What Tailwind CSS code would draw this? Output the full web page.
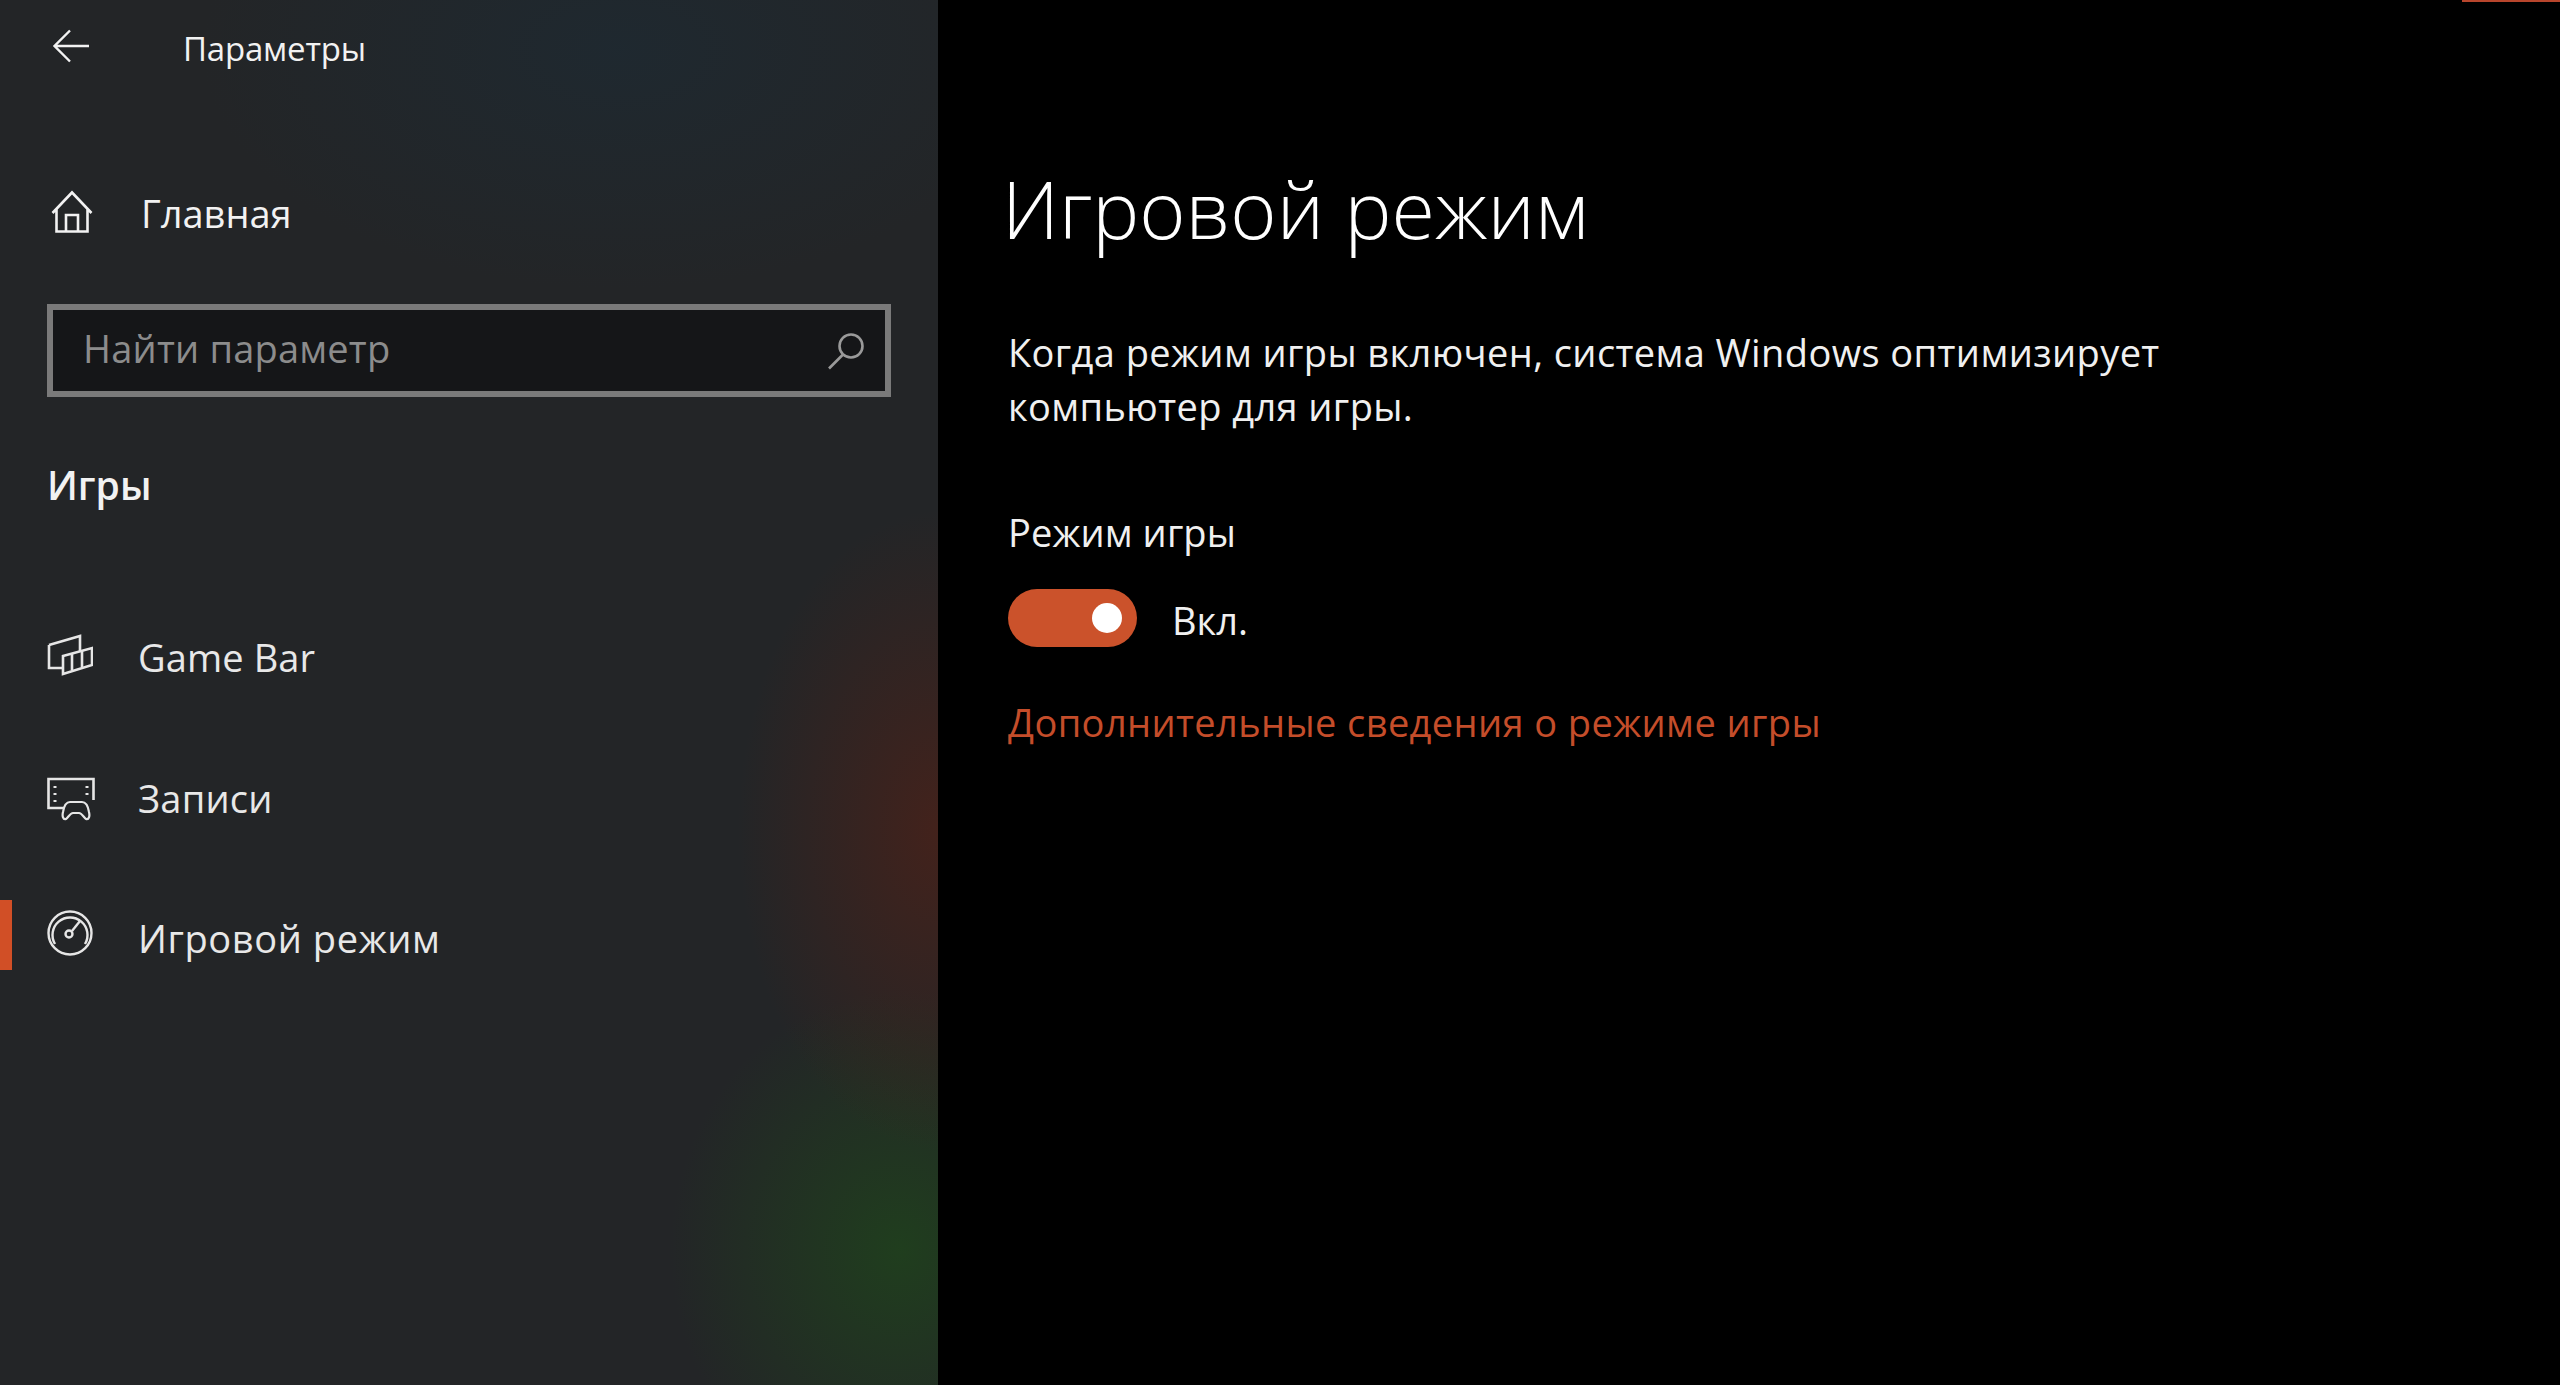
<!DOCTYPE html>
<html lang="ru">
<head>
    <meta charset="UTF-8">
    <title>Параметры</title>
    <script src="https://cdn.jsdelivr.net/npm/@tailwindcss/browser@4"></script>
</head>
<body class="bg-black text-white font-['Open_Sans',sans-serif]">
<div class="relative flex h-[1385px] w-[2560px] overflow-hidden">

    <!-- Top right accent line -->
    <div class="absolute right-0 top-0 h-[2px] w-[98px] bg-[#b8452c]"></div>

    <!-- Sidebar -->
    <aside class="flex h-full w-[938px] shrink-0 flex-col bg-[#232527] bg-[radial-gradient(ellipse_200px_320px_at_938px_830px,rgba(88,32,20,0.6),transparent),radial-gradient(ellipse_230px_260px_at_900px_1250px,rgba(30,75,25,0.65),transparent),radial-gradient(ellipse_420px_240px_at_620px_50px,rgba(20,50,70,0.28),transparent)]">

        <!-- Title row -->
        <div class="flex h-[96px] items-center pl-[52px]">
            <svg class="mb-[4px] h-[34px] w-[38px]" viewBox="0 0 38 34" fill="none" stroke="#f2f2f2" stroke-width="2.4">
                <path d="M18 1.5 2.5 17 18 32.5M2.5 17H37"/>
            </svg>
            <span class="ml-[93px] text-[33px] leading-none tracking-[-0.2px] text-[#f2f2f2]">Параметры</span>
        </div>

        <!-- Home -->
        <div class="mt-[87px] flex h-[60px] items-center pl-[50px]">
            <svg class="mb-[2px] h-[44px] w-[44px]" viewBox="0 0 44 44" fill="none" stroke="#f2f2f2" stroke-width="2.6">
                <path d="M2.5 23 22 2.5 41.5 23M6.5 19.5V41.5H37.5V19.5M16 41.5V25H28V41.5"/>
            </svg>
            <span class="ml-[47px] text-[38px] leading-none tracking-[0px] text-[#f2f2f2]">Главная</span>
        </div>

        <!-- Search box -->
        <div class="ml-[47px] mt-[61px] flex h-[93px] w-[844px] items-center justify-between border-[6px] border-[#7a7a7a] bg-[#151618] pl-[30px] pr-[20px]">
            <span class="mb-[6px] text-[38px] leading-none tracking-[0.2px] text-[#8c8c8c]">Найти параметр</span>
            <svg class="h-[38px] w-[38px]" viewBox="0 0 38 38" fill="none" stroke="#9a9a9a" stroke-width="2.6">
                <circle cx="24" cy="14" r="11.5"/>
                <path d="M16 22.5 2 36.5"/>
            </svg>
        </div>

        <!-- Section -->
        <div class="ml-[47px] mt-[64px] text-[39px] font-semibold leading-[48px] text-[#f2f2f2]">Игры</div>

        <!-- Nav -->
        <nav class="mt-[114px] flex flex-col">
            <div class="flex h-[70px] items-center pl-[47px]">
                <svg class="mb-[8px] h-[44px] w-[46px]" viewBox="0 0 46 44" fill="none" stroke="#e6e6e6" stroke-width="2.6">
                    <path d="M2 13 33 4V20M2 13V36H16"/>
                    <path d="M16 24 45 16V33L16 42Z"/>
                    <path d="M25 22V38M35 19V35"/>
                </svg>
                <span class="mb-[3px] ml-[45px] text-[38px] leading-none tracking-[0.1px] text-[#e8e8e8]">Game Bar</span>
            </div>
            <div class="mt-[71px] flex h-[70px] items-center pl-[47px]">
                <svg class="h-[44px] w-[48px]" viewBox="0 0 48 44" fill="none" stroke="#e6e6e6" stroke-width="2.6">
                    <path d="M17 31H1.5V2H46.5V23"/>
                    <path d="M8 9V11M8 16V18M8 23V25M40 9V11M40 16V18" stroke-width="3"/>
                    <path d="M19 42c-3 1-4-3-3-7 1-6 3-10 7-10h12c4 0 6 4 7 10 1 4 0 8-3 7-2-1-4-6-7-6H26c-3 0-5 5-7 6Z" stroke-width="2.2"/>
                </svg>
                <span class="mb-[3px] ml-[43px] text-[38px] leading-none tracking-[0.2px] text-[#e8e8e8]">Записи</span>
            </div>
            <div class="mt-[66px] flex h-[70px] items-center pl-[47px]">
                <div class="absolute left-0 h-[70px] w-[12px] bg-[#d14f26]"></div>
                <svg class="mb-[4px] h-[46px] w-[46px]" viewBox="0 0 46 46" fill="none" stroke="#e6e6e6" stroke-width="2.4">
                    <circle cx="23" cy="23" r="21.5"/>
                    <path d="M8 34A17.5 17.5 0 1 1 38 34" stroke-width="2.4"/>
                    <circle cx="22" cy="24" r="3.5"/>
                    <path d="M25 21 33 11"/>
                </svg>
                <span class="ml-[45px] mt-[6px] text-[38px] leading-none tracking-[0.6px] text-[#e8e8e8]">Игровой режим</span>
            </div>
        </nav>
    </aside>

    <!-- Main -->
    <main class="flex-1 pl-[70px]">
        <h1 class="ml-[-6px] mt-[155px] text-[79px] font-light leading-[108px] text-white">Игровой режим</h1>
        <p class="mt-[62px] w-[1250px] text-[38px] leading-[54px] tracking-[0.4px] text-[#f0f0f0]">Когда режим игры включен, система Windows оптимизирует компьютер для игры.</p>
        <div class="mt-[72px] text-[38px] leading-[54px] tracking-[0.1px] text-[#f0f0f0]">Режим игры</div>
        <div class="mt-[30px] flex items-center">
            <div class="flex h-[58px] w-[129px] items-center justify-end rounded-full bg-[#cb522b] pr-[15px]">
                <div class="h-[30px] w-[30px] rounded-full bg-white"></div>
            </div>
            <span class="ml-[35px] mt-[3px] text-[38px] leading-none text-[#f0f0f0]">Вкл.</span>
        </div>
        <a class="mt-[48px] block text-[38px] leading-[54px] tracking-[0.4px] text-[#c44d2a]">Дополнительные сведения о режиме игры</a>
    </main>
</div>
</body>
</html>
